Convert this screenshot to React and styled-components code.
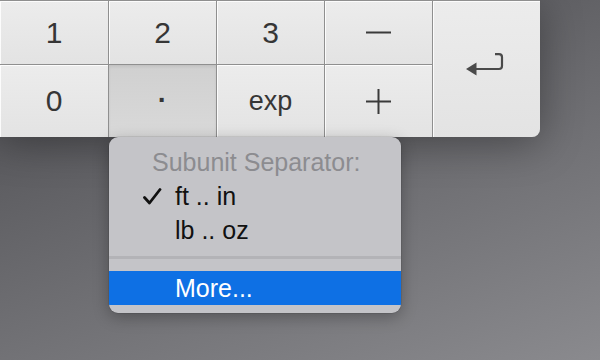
import React from "react";
import styled, { createGlobalStyle } from "styled-components";

const Global = createGlobalStyle`
  html, body {
    margin: 0;
    padding: 0;
    width: 600px;
    height: 360px;
    overflow: hidden;
  }
  body {
    font-family: "Liberation Sans", Arial, sans-serif;
  }
`;

const Desktop = styled.div`
  position: relative;
  width: 600px;
  height: 360px;
  overflow: hidden;
  background: linear-gradient(160deg, #4a4a4e 0%, #67676b 45%, #8a8a8e 100%);
`;

const Pad = styled.div`
  display: grid;
  grid-template-columns: 108px repeat(4, 107px);
  grid-template-rows: 63px 72px;
  gap: 1px;
  width: 540px;
  background: #8f8f8f;
  border-top: 1px solid #8f8f8f;
  border-bottom-right-radius: 8px;
  overflow: hidden;
  box-shadow: 0 6px 40px rgba(0, 0, 0, 0.35);
`;

const Key = styled.div`
  display: flex;
  align-items: center;
  justify-content: center;
  color: #363636;
  font-size: ${(p) => p.$size || 30}px;
  background: ${(p) =>
    p.$pressed
      ? "linear-gradient(#d0d0d0, #d9d9d9)"
      : "linear-gradient(#ececec, #e3e3e3)"};
  box-shadow: ${(p) =>
    p.$pressed
      ? "inset 0 2px 3px rgba(0, 0, 0, 0.07)"
      : "inset 1px 1px 0 rgba(255, 255, 255, 0.85)"};
  grid-row: ${(p) => (p.$tall ? "span 2" : "auto")};
  user-select: none;
`;

const Dot = styled.span`
  font-weight: bold;
  font-size: 28px;
  margin-top: -2px;
`;

const Menu = styled.div`
  position: absolute;
  left: 109px;
  top: 137px;
  width: 292px;
  padding: 8px 0;
  background: #c4c4c8;
  border-radius: 9px;
  box-shadow: 0 4px 16px rgba(0, 0, 0, 0.28), 0 0 0 0.5px rgba(0, 0, 0, 0.15);
  overflow: hidden;
  font-size: 25px;
`;

const Header = styled.div`
  height: 34px;
  line-height: 34px;
  padding-left: 43px;
  color: #8c8c90;
`;

const Item = styled.div`
  display: flex;
  align-items: center;
  height: 34px;
  padding-left: 34px;
  color: ${(p) => (p.$active ? "#fff" : "#111")};
  background: ${(p) => (p.$active ? "#0e70e4" : "transparent")};
`;

const CheckSlot = styled.span`
  display: flex;
  align-items: center;
  width: 32px;
  height: 100%;
`;

const Separator = styled.div`
  height: 3px;
  margin: 9px 0 12px;
  background: #b3b3b7;
`;

const Check = () => (
  <svg width="19" height="17" viewBox="0 0 19 17">
    <path d="M1.5 9.5 L6.5 15 L17 1.5" fill="none" stroke="#111" strokeWidth="2.8" strokeLinecap="round" strokeLinejoin="round" />
  </svg>
);

const Minus = () => (
  <svg width="25" height="3" viewBox="0 0 25 3">
    <rect x="0" y="0.5" width="25" height="2" fill="#3a3a3a" />
  </svg>
);

const Plus = () => (
  <svg width="25" height="25" viewBox="0 0 25 25">
    <rect x="0" y="11.5" width="25" height="2" fill="#3a3a3a" />
    <rect x="11.5" y="0" width="2" height="25" fill="#3a3a3a" />
  </svg>
);

const ReturnIcon = styled.svg`
  margin: -8px 3px 0 0;
`;

const Return = () => (
  <ReturnIcon width="38" height="24" viewBox="0 0 38 24">
    <path d="M29 1.2 H33 a3 3 0 0 1 3 3 V13 a3 3 0 0 1 -3 3 H9" fill="none" stroke="#4a4a4a" strokeWidth="2.2" />
    <polygon points="0,16 10.5,9.5 10.5,22.5" fill="#4a4a4a" />
  </ReturnIcon>
);

const units = ["ft .. in", "lb .. oz"];

export default function App() {
  return (
    <Desktop>
      <Global />
      <Pad>
        <Key>1</Key>
        <Key>2</Key>
        <Key>3</Key>
        <Key><Minus /></Key>
        <Key $tall><Return /></Key>
        <Key>0</Key>
        <Key $pressed><Dot>·</Dot></Key>
        <Key $size={27}>exp</Key>
        <Key><Plus /></Key>
      </Pad>
      <Menu>
        <Header>Subunit Separator:</Header>
        {units.map((u, i) => (
          <Item key={u}>
            <CheckSlot>{i === 0 && <Check />}</CheckSlot>
            {u}
          </Item>
        ))}
        <Separator />
        <Item $active>
          <CheckSlot />
          More...
        </Item>
      </Menu>
    </Desktop>
  );
}
